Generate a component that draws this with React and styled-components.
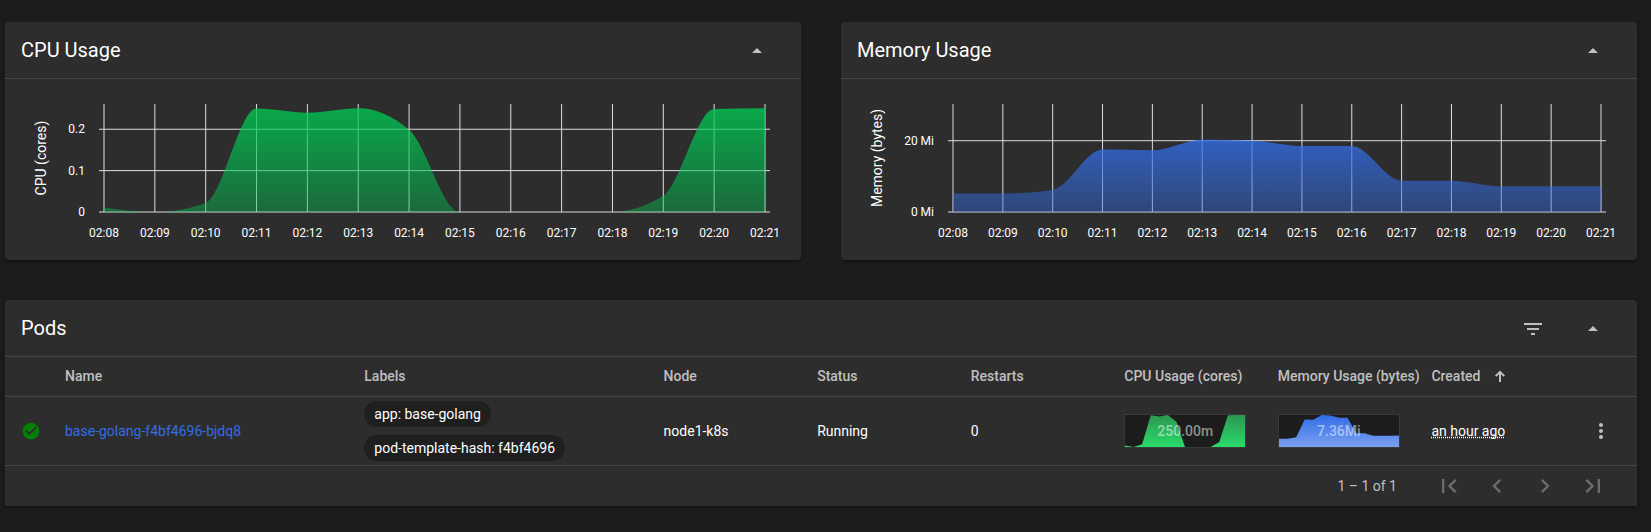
import React, { useId, useLayoutEffect, useRef, useState } from "react";
import styled, { createGlobalStyle } from "styled-components";
import {
  MdArrowDropUp,
  MdCheckCircle,
  MdChevronLeft,
  MdChevronRight,
  MdFilterList,
  MdFirstPage,
  MdLastPage,
  MdMoreVert,
} from "react-icons/md";

const GlobalStyle = createGlobalStyle`
  * { box-sizing: border-box; }
  body {
    margin: 0;
    background: #1c1c1c;
    color: #fff;
    font-family: Roboto, "Liberation Sans", sans-serif;
    font-size: 14px;
    line-height: 20px;
  }
`;

const Page = styled.main`
  display: grid;
  grid-template-columns: repeat(2, minmax(0, 1fr));
  gap: 40px;
  padding: 22px 14px 26px 5px;
`;

const CardBox = styled.section`
  grid-column: ${(p) => (p.$wide ? "1 / -1" : "auto")};
  border-radius: ${(p) => (p.$wide ? "4px 4px 0 0" : "4px")};
  background: #2d2d2d;
  box-shadow: 0 3px 1px -2px rgba(0, 0, 0, 0.2), 0 2px 2px rgba(0, 0, 0, 0.14),
    0 1px 5px rgba(0, 0, 0, 0.12);
`;

const CardHeader = styled.header`
  display: flex;
  align-items: flex-end;
  gap: 20px;
  height: 57px;
  padding: 0 24px 7px 16px;
  border-bottom: 1px solid #464646;
`;

const CardTitle = styled.h2`
  flex: 1;
  margin: 0;
  font-size: 20px;
  font-weight: 400;
  line-height: 42px;
`;

const IconButton = styled.button`
  display: flex;
  align-items: center;
  justify-content: center;
  width: ${(p) => p.$width || 40}px;
  height: 40px;
  padding: 0;
  border: 0;
  background: none;
  color: ${(p) => (p.disabled ? "#6c6c6c" : "#c0c0c0")};
  font-size: ${(p) => p.$size || 24}px;
`;

function Card({ title, wide, actions, children }) {
  return (
    <CardBox $wide={wide}>
      <CardHeader>
        <CardTitle>{title}</CardTitle>
        {actions}
        <IconButton type="button" aria-label={`Collapse ${title}`}>
          <MdArrowDropUp />
        </IconButton>
      </CardHeader>
      {children}
    </CardBox>
  );
}

const TIMES = [
  "02:08", "02:09", "02:10", "02:11", "02:12", "02:13", "02:14",
  "02:15", "02:16", "02:17", "02:18", "02:19", "02:20", "02:21",
];
const CPU = [0.011, 0, 0.022, 0.25, 0.24, 0.251, 0.199, 0, 0, 0, 0, 0.039, 0.249, 0.251];
const MEMORY = [5.2, 5.2, 6.2, 17.5, 17.3, 20.3, 20, 18.5, 18.5, 8.8, 8.8, 7.2, 7.2, 7.2];

// Monotone cubic interpolation through the points, as an SVG path.
function monotonePath(points) {
  const n = points.length;
  const slope = (i) => (points[i + 1][1] - points[i][1]) / (points[i + 1][0] - points[i][0]);
  const tangents = points.map((_, i) => {
    if (i === 0 || i === n - 1) return null;
    const a = slope(i - 1);
    const b = slope(i);
    if (a * b <= 0) return 0;
    return Math.sign(a) * 2 * Math.min(Math.abs(a), Math.abs(b), Math.abs(a + b) / 4);
  });
  tangents[0] = (3 * slope(0) - tangents[1]) / 2;
  tangents[n - 1] = (3 * slope(n - 2) - tangents[n - 2]) / 2;
  let d = `M${points[0][0]},${points[0][1]}`;
  for (let i = 0; i < n - 1; i++) {
    const [x0, y0] = points[i];
    const [x1, y1] = points[i + 1];
    const h = (x1 - x0) / 3;
    d += `C${x0 + h},${y0 + h * tangents[i]} ${x1 - h},${y1 - h * tangents[i + 1]} ${x1},${y1}`;
  }
  return d;
}

const ChartSvg = styled.svg`
  display: block;
  width: 100%;
  height: 181px;
  font-size: 12px;
  fill: #fff;
`;

const GridLine = styled.line`
  stroke: #dedede;
`;

const AxisTitle = styled.text`
  font-size: 14px;
`;

const TOP = 25;
const BASE = 133;

function AreaChart({ label, values, max, ticks, left, color }) {
  const ref = useRef(null);
  const [width, setWidth] = useState(796);
  const id = useId();

  useLayoutEffect(() => {
    const measure = () => setWidth(ref.current.getBoundingClientRect().width);
    measure();
    const observer = new ResizeObserver(measure);
    observer.observe(ref.current);
    return () => observer.disconnect();
  }, []);

  const right = width - 36;
  const x = (i) => left + ((right - left) * i) / (TIMES.length - 1);
  const y = (v) => BASE - ((BASE - TOP) * v) / max;
  const curve = monotonePath(values.map((v, i) => [x(i), y(v)]));
  const middle = (TOP + BASE) / 2;

  return (
    <ChartSvg ref={ref} role="img" aria-label={label}>
      <defs>
        <linearGradient id={id} x1="0" y1="1" x2="0" y2="0">
          <stop offset="0" stopColor={color} stopOpacity="0.4" />
          <stop offset="1" stopColor={color} stopOpacity="0.8" />
        </linearGradient>
      </defs>
      <AxisTitle x={41} y={middle} textAnchor="middle" transform={`rotate(-90 41 ${middle})`}>
        {label}
      </AxisTitle>
      {ticks.map(([value, text]) => (
        <g key={text}>
          <GridLine x1={left - 5} x2={right + 5} y1={y(value)} y2={y(value)} />
          <text x={left - 19} y={y(value) + 4} textAnchor="end">{text}</text>
        </g>
      ))}
      {TIMES.map((time, i) => (
        <g key={time}>
          <GridLine x1={x(i)} x2={x(i)} y1={TOP} y2={BASE} />
          <text x={x(i)} y={158} textAnchor="middle">{time}</text>
        </g>
      ))}
      <path d={`${curve}L${right},${BASE}L${left},${BASE}Z`} fill={`url(#${id})`} />
    </ChartSvg>
  );
}

const SparkBox = styled.div`
  position: relative;
  width: 122px;
  height: 34px;
  border: 1px solid #3a3a3a;
  background: #1c1c1c;
`;

const SparkSvg = styled.svg`
  display: block;
  width: 100%;
  height: 100%;
`;

const SparkValue = styled.span`
  position: absolute;
  inset: 0;
  display: flex;
  align-items: center;
  justify-content: center;
  color: rgba(255, 255, 255, 0.5);
  font-weight: 500;
`;

function Sparkline({ values, from, to, children }) {
  const id = useId();
  const max = Math.max(...values);
  const points = values.map((v, i) => `${(i * 120) / (values.length - 1)},${32 - (v / max) * 32}`);
  return (
    <SparkBox>
      <SparkSvg viewBox="0 0 120 32" preserveAspectRatio="none" aria-hidden="true">
        <defs>
          <linearGradient id={id} x1="0" y1="0" x2="0" y2="1">
            <stop offset="0" stopColor={from} />
            <stop offset="1" stopColor={to} />
          </linearGradient>
        </defs>
        <polygon points={`0,32 ${points.join(" ")} 120,32`} fill={`url(#${id})`} />
      </SparkSvg>
      <SparkValue>{children}</SparkValue>
    </SparkBox>
  );
}

const Table = styled.table`
  width: 100%;
  table-layout: fixed;
  border-collapse: separate;
  border-spacing: 0;
`;

const Col = styled.col`
  width: ${(p) => p.$width};
`;

const HeadCell = styled.th`
  height: 40px;
  padding: 0 0 2px;
  border-bottom: 1px solid #464646;
  color: #c0c0c0;
  font-weight: 500;
  text-align: left;
  white-space: nowrap;
`;

const SortLabel = styled.span`
  display: flex;
  align-items: center;
  gap: 14px;
`;

const Cell = styled.td`
  padding: 4px 0;
  padding-left: ${(p) => (p.$icon ? 16 : 0)}px;
  border-bottom: 1px solid #464646;
`;

const StatusIcon = styled(MdCheckCircle)`
  display: block;
  color: #008000;
  font-size: 20px;
`;

const PodLink = styled.a`
  color: #326de6;
  text-decoration: none;
`;

const ChipList = styled.div`
  display: flex;
  flex-direction: column;
  align-items: flex-start;
  gap: 8px;
`;

const Chip = styled.span`
  padding: 3px 10px;
  border-radius: 13px;
  background: #1f1f1f;
`;

const RelativeTime = styled.span`
  text-decoration: underline dotted;
  text-decoration-skip-ink: none;
`;

const Paginator = styled.nav`
  display: flex;
  align-items: center;
  justify-content: flex-end;
  height: 40px;
  padding-right: 20px;
`;

const Range = styled.span`
  margin-right: 28px;
  color: #c0c0c0;
`;

const COLUMNS = ["60px", "18.34%", "18.34%", "9.41%", "9.41%", "9.41%", "9.41%", "9.41%", "auto", "56px"];
const PAGES = [
  ["First page", MdFirstPage],
  ["Previous page", MdChevronLeft],
  ["Next page", MdChevronRight],
  ["Last page", MdLastPage],
];

export default function App() {
  return (
    <>
      <GlobalStyle />
      <Page>
        <Card title="CPU Usage">
          <AreaChart
            label="CPU (cores)"
            values={CPU}
            max={0.261}
            ticks={[[0, "0"], [0.1, "0.1"], [0.2, "0.2"]]}
            left={99}
            color="#00c752"
          />
        </Card>
        <Card title="Memory Usage">
          <AreaChart
            label="Memory (bytes)"
            values={MEMORY}
            max={30.3}
            ticks={[[0, "0 Mi"], [20, "20 Mi"]]}
            left={112}
            color="#326de6"
          />
        </Card>
        <Card
          title="Pods"
          wide
          actions={
            <IconButton type="button" aria-label="Filter">
              <MdFilterList />
            </IconButton>
          }
        >
          <Table>
            <colgroup>
              {COLUMNS.map((width, i) => <Col key={i} $width={width} />)}
            </colgroup>
            <thead>
              <tr>
                <HeadCell aria-label="State" />
                <HeadCell>Name</HeadCell>
                <HeadCell>Labels</HeadCell>
                <HeadCell>Node</HeadCell>
                <HeadCell>Status</HeadCell>
                <HeadCell>Restarts</HeadCell>
                <HeadCell>CPU Usage (cores)</HeadCell>
                <HeadCell>Memory Usage (bytes)</HeadCell>
                <HeadCell aria-sort="ascending">
                  <SortLabel>
                    Created
                    <svg width="12" height="12" viewBox="0 0 12 12" fill="none" stroke="currentColor" strokeWidth="2" aria-hidden="true">
                      <path d="M6 12V2M1.7 6.1L6 1.8L10.3 6.1" />
                    </svg>
                  </SortLabel>
                </HeadCell>
                <HeadCell aria-label="Actions" />
              </tr>
            </thead>
            <tbody>
              <tr>
                <Cell $icon><StatusIcon aria-label="Running" /></Cell>
                <Cell><PodLink href="#pod">base-golang-f4bf4696-bjdq8</PodLink></Cell>
                <Cell>
                  <ChipList>
                    <Chip>app: base-golang</Chip>
                    <Chip>pod-template-hash: f4bf4696</Chip>
                  </ChipList>
                </Cell>
                <Cell>node1-k8s</Cell>
                <Cell>Running</Cell>
                <Cell>0</Cell>
                <Cell>
                  <Sparkline values={[...CPU, 0.251]} from="#2c9650" to="#2bdb6a">250.00m</Sparkline>
                </Cell>
                <Cell>
                  <Sparkline values={[...MEMORY, 7.36]} from="#326de6" to="#7a9ff0">7.36Mi</Sparkline>
                </Cell>
                <Cell><RelativeTime>an hour ago</RelativeTime></Cell>
                <Cell>
                  <IconButton type="button" aria-label="Pod actions">
                    <MdMoreVert />
                  </IconButton>
                </Cell>
              </tr>
            </tbody>
          </Table>
          <Paginator aria-label="Pods pages">
            <Range>1 – 1 of 1</Range>
            {PAGES.map(([label, Icon]) => (
              <IconButton key={label} type="button" aria-label={label} disabled $width={48} $size={28}>
                <Icon />
              </IconButton>
            ))}
          </Paginator>
        </Card>
      </Page>
    </>
  );
}
